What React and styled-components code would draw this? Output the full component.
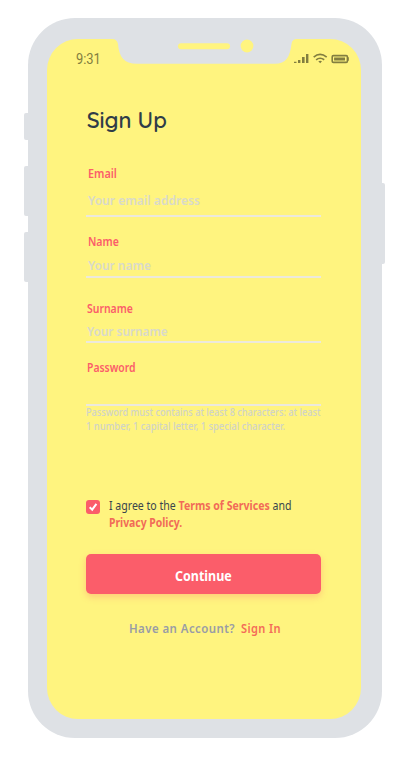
import React from "react";
import styled, { createGlobalStyle } from "styled-components";

const GlobalStyle = createGlobalStyle`
  * { box-sizing: border-box; }
  body { margin: 0; background: #fff; font-family: "Noto Sans", "Open Sans", sans-serif; }
`;

const Page = styled.main`
  width: 413px;
  height: 765px;
  padding: 18px 0 0 27.5px;
  overflow: hidden;
`;

const Device = styled.div`
  position: relative;
  width: 354.5px;
  height: 720.3px;
  padding: 21px 21px 19.3px 19.5px;
  border-radius: 47px;
  background: #dee1e5;
`;

const SideButton = styled.span`
  position: absolute;
  ${(p) => (p.$side === "right" ? "right: -3px;" : "left: -3.3px;")}
  top: ${(p) => p.$top}px;
  width: 6px;
  height: ${(p) => p.$height}px;
  border-radius: 2px;
  background: #dee1e5;
`;

const Screen = styled.section`
  display: flex;
  flex-direction: column;
  height: 100%;
  border-radius: 31px;
  background: #fff47f;
`;

const Notch = styled.svg`
  position: absolute;
  left: 80.5px;
  top: 20px;
`;

const StatusBar = styled.header`
  display: flex;
  justify-content: space-between;
  align-items: center;
  height: 39px;
  padding: 0 11px 0 29px;
  color: #827e40;
`;

const Fitted = styled.span`
  display: inline-block;
  white-space: pre;
  transform: scaleX(${(p) => p.$x || 1});
  transform-origin: left center;
`;

const Clock = styled(Fitted)`
  font: 400 14px/16px Roboto, sans-serif;
`;

const Content = styled.div`
  display: flex;
  flex-direction: column;
  width: 235px;
  margin-left: 39px;
`;

const Title = styled.h1`
  height: 30px;
  margin: 27px 0 0;
  padding-left: 0.7px;
  font: 600 22px/30px Quicksand, Lato, sans-serif;
  color: #2f3c48;
`;

const Field = styled.label`
  display: flex;
  flex-direction: column;
  height: ${(p) => p.$height}px;
  margin-top: ${(p) => p.$gap}px;
  padding-left: ${(p) => p.$inset || 0}px;
`;

const Label = styled.span`
  height: 16px;
  font-size: 12px;
  line-height: 16px;
  font-weight: 600;
  color: #fb5d6a;
`;

const Placeholder = styled.span`
  height: 16px;
  margin-top: ${(p) => p.$gap}px;
  font-size: 12.5px;
  line-height: 16px;
  font-weight: 600;
  color: #d9dacb;
`;

const Rule = styled.div`
  flex: none;
  height: 2px;
  background: #ece9dc;
`;

const Hint = styled.p`
  display: flex;
  flex-direction: column;
  margin: -1px 0 0;
  font-size: 11px;
  line-height: 14px;
  font-weight: 500;
  color: #d0d3c8;
`;

const Agreement = styled.div`
  display: flex;
  margin-top: 64px;
  gap: 8.5px;
`;

const Checkbox = styled.span`
  display: flex;
  width: 14px;
  height: 14px;
  margin-top: 3px;
  border-radius: 3px;
  background: #fb5d6a;
`;

const Terms = styled.div`
  display: flex;
  flex-direction: column;
  font-size: 12px;
  line-height: 17px;
  color: #39454d;
  b { font-weight: 700; color: #f16b58; }
`;

const Button = styled.button`
  display: flex;
  align-items: center;
  width: 235px;
  height: 40px;
  margin: 23px 0 0;
  padding: 2px 0 0 89px;
  border: 0;
  border-radius: 5px;
  background: #fb5d6a;
  box-shadow: 0 3px 7px rgba(251, 93, 106, .28);
  color: #fff;
  font: 700 14.5px/20px "Noto Sans", sans-serif;
`;

const Footer = styled.div`
  display: grid;
  grid-template-columns: 112px auto;
  margin: 26px 0 0 43px;
  font-size: 12px;
  line-height: 18px;
  font-weight: 600;
  letter-spacing: .45px;
  color: #989ca6;
`;

const SignIn = styled.a`
  color: #f46b58;
`;

const StatusIcons = () => (
  <svg width="57" height="12" viewBox="0 0 57 12" fill="currentColor">
    <path d="M1 8.7h2.5V10H1zM5 7h2.4v3H5zM9 4h2.6v6H9zM13 1h2.4v9H13z" />
    <g fill="none" stroke="currentColor" strokeWidth="1.7">
      <path d="M20.7 4.1Q27 -1.3 33.7 4.1M23.1 6.8Q27.1 3.7 31.2 6.8" />
    </g>
    <path d="M25.3 8.3Q27.2 7 29 8.3L27.2 10.3z" />
    <rect x="39.2" y="2.6" width="15.2" height="6.8" rx="1.2" fill="none" stroke="currentColor" strokeWidth="1.6" />
    <path d="M41.1 4.6h10.9v2.8H41.1zM54.8 4.2h1v3.5h-1z" />
  </svg>
);

const fields = [
  { label: "Email", hint: "Your email address", gap: 31, height: 49, hintGap: 11, inset: 1.5, lx: .9, px: .965 },
  { label: "Name", hint: "Your name", gap: 17, height: 42, hintGap: 8, inset: 1.5, lx: .88, px: .955 },
  { label: "Surname", hint: "Your surname", gap: 23, height: 40, hintGap: 7, inset: 0.5, lx: .87, px: .945 },
  { label: "Password", hint: "", gap: 17, height: 44, hintGap: 0, inset: 0.5, lx: .865, px: 1 },
];

export default function App() {
  return (
    <>
      <GlobalStyle />
      <Page>
        <Device>
          <SideButton $top={95} $height={27} />
          <SideButton $top={148} $height={50} />
          <SideButton $top={213.5} $height={50.5} />
          <SideButton $side="right" $top={164.5} $height={81} />
          <Screen>
            <StatusBar>
              <Clock $x={.92}>9:31</Clock>
              <StatusIcons />
            </StatusBar>
            <Content>
              <Title><Fitted $x={1}>Sign Up</Fitted></Title>
              {fields.map((f) => (
                <React.Fragment key={f.label}>
                  <Field $gap={f.gap} $height={f.height} $inset={f.inset}>
                    <Label><Fitted $x={f.lx}>{f.label}</Fitted></Label>
                    {f.hint && <Placeholder $gap={f.hintGap}><Fitted $x={f.px}>{f.hint}</Fitted></Placeholder>}
                  </Field>
                  <Rule />
                </React.Fragment>
              ))}
              <Hint>
                <Fitted $x={.835}>Password must contains at least 8 characters: at least</Fitted>
                <Fitted $x={.85}>1 number, 1 capital letter, 1 special character.</Fitted>
              </Hint>
              <Agreement>
                <Checkbox>
                  <svg width="14" height="14" viewBox="0 0 14 14" fill="none" stroke="#fff" strokeWidth="2">
                    <path d="M3.7 7.2L6.2 9.7L10.4 3.8" />
                  </svg>
                </Checkbox>
                <Terms>
                  <Fitted $x={.88}>I agree to the <b>Terms of Services</b> and</Fitted>
                  <Fitted $x={.865}><b>Privacy Policy.</b></Fitted>
                </Terms>
              </Agreement>
              <Button type="button"><Fitted $x={.86}>Continue</Fitted></Button>
              <Footer>
                <Fitted $x={.955}>Have an Account?</Fitted>
                <SignIn><Fitted $x={.92}>Sign In</Fitted></SignIn>
              </Footer>
            </Content>
          </Screen>
          <Notch width="194" height="29" viewBox="108 38 194 29">
            <path fill="#dee1e5" d="M108 38V39H112Q117 39 118 44C119 57 124 63.7 137 63.7H275C286 63.7 290 57 291.5 44Q292 39 297 39H302V38Z" />
            <rect x="178" y="43.3" width="52" height="6" rx="3" fill="#fff47f" />
            <circle cx="247" cy="46" r="6.4" fill="#fff47f" />
          </Notch>
        </Device>
      </Page>
    </>
  );
}
